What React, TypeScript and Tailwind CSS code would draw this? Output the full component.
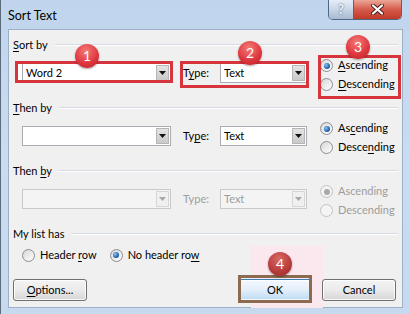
import type { ReactNode } from "react";

function U({ children }: { children: ReactNode }) {
  return <span className="underline decoration-1 underline-offset-[2px]">{children}</span>;
}

function Radio({ checked = false, disabled = false }: { checked?: boolean; disabled?: boolean }) {
  return (
    <span
      className={`flex h-[13px] w-[13px] shrink-0 items-center justify-center rounded-full border ${
        disabled
          ? "border-[#c2c2c2] bg-[#f4f4f4]"
          : "border-[#8b8d90] bg-gradient-to-br from-[#d6d6d6] to-[#ffffff]"
      }`}
    >
      {checked && (
        <span
          className={`h-[6px] w-[6px] rounded-full ${
            disabled
              ? "bg-[#a9a9a9]"
              : "bg-[radial-gradient(circle_at_35%_35%,#8cc4f2,#2063b0_60%,#123f78)]"
          }`}
        />
      )}
    </span>
  );
}

function Combo({ value = "", width, disabled = false }: { value?: string; width: string; disabled?: boolean }) {
  return (
    <div
      className={`relative flex h-[20px] items-center border ${width} ${
        disabled ? "border-[#c9c9c9] bg-[#f4f4f4] text-[#9d9d9d]" : "border-[#a9adb3] bg-white text-black"
      }`}
    >
      <span className="flex-1 pl-[3px] leading-[18px]">{value}</span>
      <span
        className={`mr-[1px] flex h-[16px] w-[13px] items-center justify-center border ${
          disabled
            ? "border-[#d6d6d6] bg-[#f0f0f0]"
            : "border-[#b5b5b5] bg-gradient-to-b from-[#e4e4e4] to-[#c9c9c9]"
        }`}
      >
        <svg width="7" height="4" viewBox="0 0 7 4">
          <path d="M0 0h7L3.5 4z" fill={disabled ? "#a8a8a8" : "#111"} />
        </svg>
      </span>
    </div>
  );
}

function SectionHeader({ children }: { children: ReactNode }) {
  return (
    <div className="flex h-[16px] items-center">
      <span className="leading-[16px]">{children}</span>
      <div className="ml-[7px] h-[2px] flex-1 border-t border-b border-t-[#d5dbe2] border-b-white" />
    </div>
  );
}

function SortRow({
  value,
  type,
  asc,
  desc,
  disabled = false,
}: {
  value?: string;
  type: ReactNode;
  asc: ReactNode;
  desc: ReactNode;
  disabled?: boolean;
}) {
  return (
    <div className={`flex items-start ${disabled ? "text-[#9d9d9d]" : "text-black"}`}>
      <div className="ml-[9px] mt-[10px]">
        <Combo value={value} width="w-[149px]" disabled={disabled} />
      </div>
      <span className="ml-[12px] mt-[10px] w-[37px] leading-[20px]">{type}</span>
      <div className="mt-[10px]">
        <Combo value="Text" width="w-[87px]" disabled={disabled} />
      </div>
      <div className="ml-[13px] mt-[3px] flex flex-col">
        <div className="flex h-[19px] items-center gap-[5px]">
          <Radio checked disabled={disabled} />
          <span>{asc}</span>
        </div>
        <div className="flex h-[19px] items-center gap-[5px]">
          <Radio disabled={disabled} />
          <span>{desc}</span>
        </div>
      </div>
    </div>
  );
}

function Button({ children, primary = false }: { children: ReactNode; primary?: boolean }) {
  return (
    <div
      className={`flex h-[22px] w-[74px] items-center justify-center rounded-[3px] border shadow-[inset_0_0_0_1px_rgba(255,255,255,0.8)] ${
        primary
          ? "border-[#3c7fb1] bg-gradient-to-b from-[#f6f8ff] via-[#e2effb] to-[#bcdaf3]"
          : "border-[#707070] bg-gradient-to-b from-[#f3f3f3] via-[#ebebeb] to-[#d6d6d6]"
      }`}
    >
      {children}
    </div>
  );
}

function Badge({ n, pos, dark = false }: { n: string; pos: string; dark?: boolean }) {
  return (
    <div
      className={`absolute flex h-[24px] w-[24px] items-center justify-center rounded-full text-[14px] leading-none text-white shadow-[0_1px_2px_rgba(0,0,0,0.35)] ${pos} ${
        dark
          ? "bg-[radial-gradient(circle_at_45%_30%,#d86a63,#b7393a_60%,#962a2b)]"
          : "bg-[radial-gradient(circle_at_45%_30%,#f57a76,#dc343c_60%,#bb232b)]"
      }`}
    >
      {n}
    </div>
  );
}

export default function App() {
  return (
    <div className="relative flex h-[314px] w-[410px] flex-col overflow-hidden border-l border-[#5c6b7c] bg-gradient-to-b from-[#c0d5ed] via-[#c9dcf1] to-[#c6d9ef] font-[Lato,sans-serif] text-[11px] text-black">
      {/* title bar */}
      <div className="flex h-[29px] items-start pl-[7px] pr-[8px]">
        <span className="mt-[9px] text-[12.5px] leading-[14px] text-black">Sort Text</span>
        <div className="ml-auto flex h-[20px] w-[74px] overflow-hidden rounded-b-[5px] border border-t-0 border-[#4e6783]">
          <div className="flex w-[25px] items-center justify-center border-r border-[#4e6783] bg-gradient-to-b from-[#e6eef8] via-[#c8d6e7] to-[#a9bbd2]">
            <span className="text-[13px] font-bold leading-none text-[#f4f6f9] [text-shadow:0_0_2px_#33465e]">?</span>
          </div>
          <div className="flex flex-1 items-center justify-center bg-gradient-to-b from-[#eba698] via-[#d45a4b] to-[#c03826]">
            <svg width="13" height="11" viewBox="0 0 13 11">
              <path d="M2 1.5l9 8M11 1.5l-9 8" stroke="#4a1d18" strokeWidth="4" strokeLinecap="round" />
              <path d="M2 1.5l9 8M11 1.5l-9 8" stroke="#fff" strokeWidth="2.2" strokeLinecap="round" />
            </svg>
          </div>
        </div>
      </div>

      {/* client area */}
      <div className="mx-[7px] flex h-[279px] flex-col border border-[#9db0c6] bg-[#f0f0f0] pl-[4px] pr-[4px] pt-[7px]">
        {/* annotation fills behind controls */}
        <div className="absolute left-[14px] top-[61px] h-[22px] w-[158px] bg-white" />
        <div className="absolute left-[250px] top-[246px] h-[62px] w-[72px] bg-[#fbe7ee]" />

        <section className="relative h-[63px]">
          <SectionHeader>
            <U>S</U>ort by
          </SectionHeader>
          <SortRow
            value="Word 2"
            type={
              <>
                T<U>y</U>pe:
              </>
            }
            asc={
              <>
                <U>A</U>scending
              </>
            }
            desc={
              <>
                <U>D</U>escending
              </>
            }
          />
        </section>

        <section className="relative h-[63px]">
          <SectionHeader>
            <U>T</U>hen by
          </SectionHeader>
          <SortRow
            type={
              <>
                Ty<U>p</U>e:
              </>
            }
            asc={
              <>
                As<U>c</U>ending
              </>
            }
            desc={
              <>
                Desce<U>n</U>ding
              </>
            }
          />
        </section>

        <section className="relative h-[63px]">
          <SectionHeader>
            Then <U>b</U>y
          </SectionHeader>
          <SortRow disabled type="Type:" asc="Ascending" desc="Descending" />
        </section>

        <section className="relative">
          <SectionHeader>My list has</SectionHeader>
          <div className="flex h-[26px] items-center pl-[9px]">
            <Radio />
            <span className="ml-[5px]">
              Header <U>r</U>ow
            </span>
            <div className="ml-[13px]">
              <Radio checked />
            </div>
            <span className="ml-[5px]">
              No header ro<U>w</U>
            </span>
          </div>
          <div className="mt-[11px] flex pr-[2px]">
            <Button>
              <span>
                <U>O</U>ptions...
              </span>
            </Button>
            <div className="ml-auto flex gap-[10px]">
              <Button primary>OK</Button>
              <Button>Cancel</Button>
            </div>
          </div>
        </section>
      </div>

      {/* annotations */}
      <div className="pointer-events-none absolute left-[14px] top-[61px] h-[22px] w-[158px] border-[3px] border-[#d7353e]" />
      <div className="pointer-events-none absolute left-[179px] top-[61px] h-[27px] w-[129px] border-[3px] border-[#d7353e]" />
      <div className="pointer-events-none absolute left-[317px] top-[55px] h-[44px] w-[83px] border-[3px] border-[#d7353e]" />
      <div className="pointer-events-none absolute left-[237px] top-[275px] h-[28px] w-[74px] border-[3px] border-[#8b6a4f]" />

      <Badge n="1" pos="left-[74px] top-[44px]" />
      <Badge n="2" pos="left-[237px] top-[41px]" />
      <Badge n="3" pos="left-[345px] top-[35px]" />
      <Badge n="4" pos="left-[267px] top-[252px]" dark />
    </div>
  );
}
